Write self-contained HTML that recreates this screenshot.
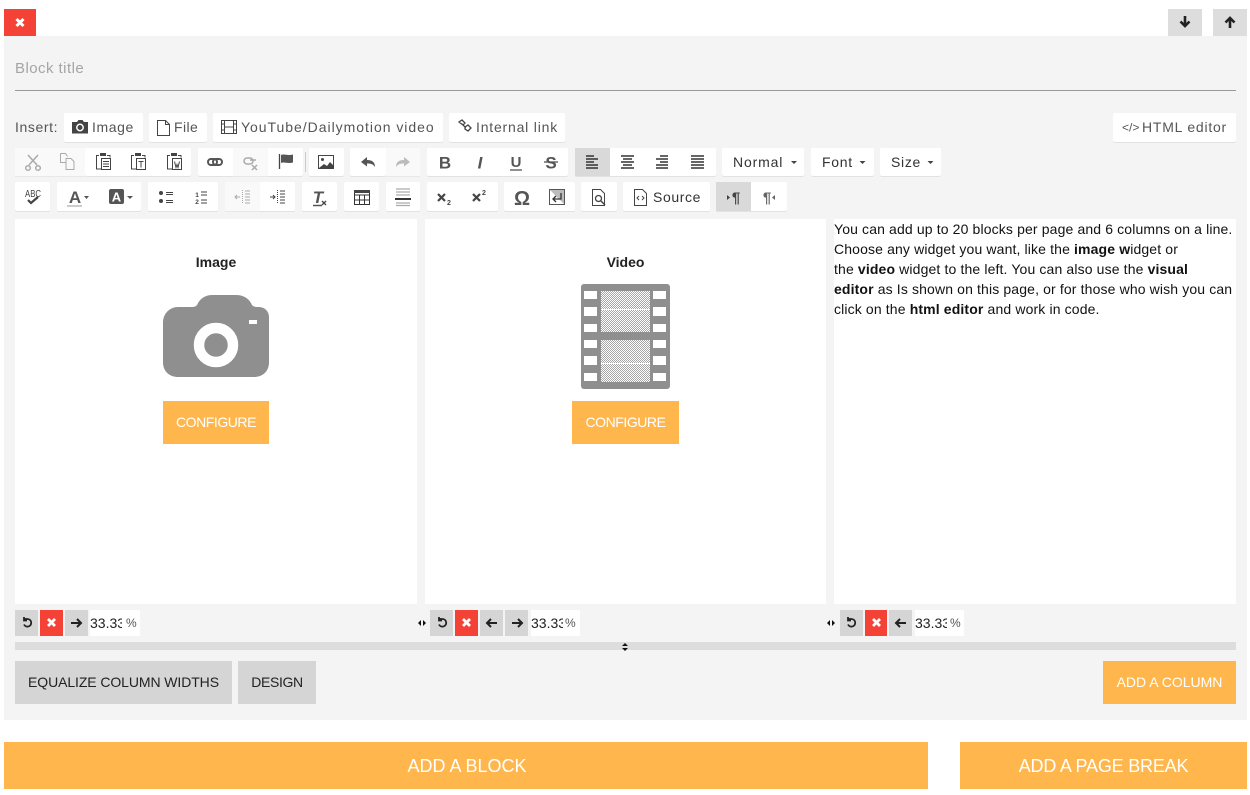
<!DOCTYPE html>
<html><head><meta charset="utf-8"><title>Block editor</title>
<style>
html,body{margin:0;padding:0;background:#fff;width:1250px;height:795px;overflow:hidden;font-family:"Liberation Sans",sans-serif}
.r{position:absolute}
.b{position:absolute;background:#fff;box-shadow:0 1px 0 #e2e2e2;border-radius:2px}
.d{position:absolute;background:#f9f9f9;box-shadow:0 1px 0 #e8e8e8}
.a{position:absolute;background:#d9d9d9}
.g{position:absolute;background:#d5d5d5}
.red{position:absolute;background:#f44336}
.o{position:absolute;background:#ffb74d}
.t{position:absolute;white-space:nowrap;line-height:20px;height:20px}
svg{position:absolute;left:0;top:0}
</style></head><body>
<div class="red" style="left:4px;top:9px;width:32px;height:27px"></div>
<div class="a" style="left:1168px;top:9px;width:34px;height:27px;background:#ddd"></div>
<div class="a" style="left:1213px;top:9px;width:34px;height:27px;background:#ddd"></div>
<div class="r" style="left:4px;top:36px;width:1243px;height:684px;background:#f4f4f4"></div>
<div class="t" style="left:15px;top:59px;font-size:15px;color:#a5a5a5;letter-spacing:.45px">Block title</div>
<div class="r" style="left:15px;top:90px;width:1221px;height:1px;background:#999"></div>

<div class="t" style="left:15px;top:117px;font-size:14px;color:#555;letter-spacing:.6px">Insert:</div>
<div class="b" style="left:64px;top:113px;width:79px;height:29px"></div>
<div class="b" style="left:149px;top:113px;width:58px;height:29px"></div>
<div class="b" style="left:213px;top:113px;width:230px;height:29px"></div>
<div class="b" style="left:449px;top:113px;width:116px;height:29px"></div>
<div class="b" style="left:1113px;top:113px;width:123px;height:29px"></div>
<div class="t" style="left:92px;top:117px;font-size:14px;color:#555;letter-spacing:.6px">Image</div>
<div class="t" style="left:174px;top:117px;font-size:14px;color:#555;letter-spacing:.4px">File</div>
<div class="t" style="left:241px;top:117px;font-size:14px;color:#555;letter-spacing:.97px">YouTube/Dailymotion video</div>
<div class="t" style="left:476px;top:117px;font-size:14px;color:#555;letter-spacing:.8px">Internal link</div>
<div class="t" style="left:1142px;top:117px;font-size:14px;color:#555;letter-spacing:.77px">HTML editor</div>

<!-- toolbar row 1 -->
<div class="d" style="left:15px;top:148px;width:70px;height:28px"></div>
<div class="b" style="left:85px;top:148px;width:106px;height:28px"></div>
<div class="b" style="left:198px;top:148px;width:105px;height:28px"></div>
<div class="d" style="left:233px;top:148px;width:35px;height:28px"></div>
<div class="r" style="left:305px;top:152px;width:1px;height:20px;background:#ccc"></div>
<div class="b" style="left:309px;top:148px;width:35px;height:28px"></div>
<div class="b" style="left:350px;top:148px;width:36px;height:28px"></div>
<div class="d" style="left:386px;top:148px;width:34px;height:28px"></div>
<div class="b" style="left:427px;top:148px;width:141px;height:28px"></div>
<div class="b" style="left:575px;top:148px;width:141px;height:28px"></div>
<div class="a" style="left:575px;top:148px;width:35px;height:28px"></div>
<div class="b" style="left:722px;top:148px;width:82px;height:28px"></div>
<div class="b" style="left:811px;top:148px;width:63px;height:28px"></div>
<div class="b" style="left:880px;top:148px;width:61px;height:28px"></div>
<div class="t" style="left:733px;top:152px;font-size:14px;color:#333;letter-spacing:.85px">Normal</div>
<div class="t" style="left:822px;top:152px;font-size:14px;color:#333;letter-spacing:.7px">Font</div>
<div class="t" style="left:891px;top:152px;font-size:14px;color:#333;letter-spacing:.7px">Size</div>

<!-- toolbar row 2 -->
<div class="b" style="left:15px;top:182px;width:35px;height:29px"></div>
<div class="b" style="left:57px;top:182px;width:84px;height:29px"></div>
<div class="b" style="left:148px;top:182px;width:70px;height:29px"></div>
<div class="b" style="left:225px;top:182px;width:70px;height:29px"></div>
<div class="d" style="left:225px;top:182px;width:35px;height:29px"></div>
<div class="b" style="left:302px;top:182px;width:35px;height:29px"></div>
<div class="b" style="left:344px;top:182px;width:35px;height:29px"></div>
<div class="b" style="left:386px;top:182px;width:34px;height:29px"></div>
<div class="b" style="left:427px;top:182px;width:71px;height:29px"></div>
<div class="b" style="left:504px;top:182px;width:71px;height:29px"></div>
<div class="b" style="left:581px;top:182px;width:36px;height:29px"></div>
<div class="b" style="left:623px;top:182px;width:87px;height:29px"></div>
<div class="b" style="left:716px;top:182px;width:71px;height:29px"></div>
<div class="a" style="left:716px;top:182px;width:35px;height:29px"></div>
<div class="t" style="left:653px;top:187px;font-size:14px;color:#333;letter-spacing:.6px">Source</div>

<!-- columns -->
<div class="r" style="left:15px;top:219px;width:402px;height:385px;background:#fff"></div>
<div class="r" style="left:425px;top:219px;width:401px;height:385px;background:#fff"></div>
<div class="r" style="left:834px;top:219px;width:402px;height:385px;background:#fff"></div>
<div class="t" style="left:15px;width:402px;text-align:center;top:252px;font-size:14px;font-weight:bold;color:#222">Image</div>
<div class="t" style="left:425px;width:401px;text-align:center;top:252px;font-size:14px;font-weight:bold;color:#222">Video</div>
<div class="o" style="left:163px;top:401px;width:106px;height:43px"></div>
<div class="o" style="left:572px;top:401px;width:107px;height:43px"></div>
<div class="t" style="left:163px;width:106px;text-align:center;top:412px;font-size:14px;color:#fff;letter-spacing:-.45px">CONFIGURE</div>
<div class="t" style="left:572px;width:107px;text-align:center;top:412px;font-size:14px;color:#fff;letter-spacing:-.45px">CONFIGURE</div>
<div class="r" style="left:834px;top:219px;width:404px;font-size:14px;line-height:20px;color:#111;white-space:nowrap;letter-spacing:.135px">You can add up to 20 blocks per page and 6 columns on a line.<br>Choose any widget you want, like the <b>image w</b>idget or<br>the <b>video</b> widget to the left. You can also use the <b>visual</b><br><b>editor</b> as Is shown on this page, or for those who wish you can<br>click on the <b>html editor</b> and work in code.</div>

<!-- film frames -->
<div class="r" style="left:581px;top:284px;width:89px;height:105px;background:#8f8f8f;border-radius:3px"></div>
<div class="r" style="left:601px;top:291px;width:49px;height:41px;background:repeating-conic-gradient(#a6a6a6 0 25%,#fff 0 50%) 0 0/2px 2px"></div>
<div class="r" style="left:601px;top:340px;width:49px;height:42px;background:repeating-conic-gradient(#a6a6a6 0 25%,#fff 0 50%) 0 0/2px 2px"></div>
<div class="r" style="left:601px;top:309px;width:49px;height:1px;background:#fff"></div>
<div class="r" style="left:601px;top:363px;width:49px;height:1px;background:#fff"></div>

<!-- column controls -->
<div class="g" style="left:15px;top:610px;width:23px;height:26px"></div>
<div class="red" style="left:40px;top:610px;width:23px;height:26px"></div>
<div class="g" style="left:65px;top:610px;width:23px;height:26px"></div>
<div class="r" style="left:90px;top:610px;width:50px;height:26px;background:#fff"></div>
<div class="r" style="left:90px;top:613px;width:32px;height:20px;overflow:hidden;font-size:14px;line-height:20px;color:#222;white-space:nowrap">33.33</div>
<div class="t" style="left:126px;top:613px;font-size:12px;color:#555">%</div>

<div class="g" style="left:430px;top:610px;width:23px;height:26px"></div>
<div class="red" style="left:455px;top:610px;width:23px;height:26px"></div>
<div class="g" style="left:480px;top:610px;width:23px;height:26px"></div>
<div class="g" style="left:505px;top:610px;width:23px;height:26px"></div>
<div class="r" style="left:531px;top:610px;width:49px;height:26px;background:#fff"></div>
<div class="r" style="left:531px;top:613px;width:32px;height:20px;overflow:hidden;font-size:14px;line-height:20px;color:#222;white-space:nowrap">33.33</div>
<div class="t" style="left:565px;top:613px;font-size:12px;color:#555">%</div>

<div class="g" style="left:840px;top:610px;width:23px;height:26px"></div>
<div class="red" style="left:865px;top:610px;width:22px;height:26px"></div>
<div class="g" style="left:889px;top:610px;width:23px;height:26px"></div>
<div class="r" style="left:915px;top:610px;width:49px;height:26px;background:#fff"></div>
<div class="r" style="left:915px;top:613px;width:32px;height:20px;overflow:hidden;font-size:14px;line-height:20px;color:#222;white-space:nowrap">33.33</div>
<div class="t" style="left:950px;top:613px;font-size:12px;color:#555">%</div>

<div class="r" style="left:15px;top:642px;width:1221px;height:8px;background:#ddd"></div>

<!-- bottom buttons -->
<div class="g" style="left:15px;top:661px;width:217px;height:43px"></div>
<div class="g" style="left:238px;top:661px;width:78px;height:43px"></div>
<div class="o" style="left:1103px;top:661px;width:133px;height:43px"></div>
<div class="t" style="left:15px;width:217px;text-align:center;top:672px;font-size:14px;color:#222;letter-spacing:-.09px">EQUALIZE COLUMN WIDTHS</div>
<div class="t" style="left:238px;width:78px;text-align:center;top:672px;font-size:14px;color:#222;letter-spacing:-.35px">DESIGN</div>
<div class="t" style="left:1103px;width:133px;text-align:center;top:672px;font-size:14px;color:#fff">ADD A COLUMN</div>
<div class="o" style="left:4px;top:742px;width:924px;height:47px"></div>
<div class="o" style="left:960px;top:742px;width:287px;height:47px"></div>
<div class="t" style="left:5px;width:924px;text-align:center;top:756px;font-size:18px;color:#fff">ADD A BLOCK</div>
<div class="t" style="left:960px;width:287px;text-align:center;top:756px;font-size:18px;color:#fff;letter-spacing:-.2px">ADD A PAGE BREAK</div>

<svg width="1250" height="795" viewBox="0 0 1250 795" font-family="Liberation Sans, sans-serif">
<!-- top icons -->
<path d="M16.500 19l7 7M23.500 19l-7 7" stroke="#fff" stroke-width="3" fill="none"/>
<path d="M1185 16v10M1180.500 21.500l4.500 4.500 4.500-4.500" stroke="#222" stroke-width="2.600" fill="none"/>
<path d="M1230 28v-10M1225.500 22.500l4.500-4.500 4.500 4.500" stroke="#222" stroke-width="2.600" fill="none"/>

<!-- insert row icons -->
<path d="M72 122h5l1.500-2h4l1.500 2h4v11.500h-16z" fill="#444"/><circle cx="80" cy="127.500" r="3.200" fill="none" stroke="#fff" stroke-width="1.500"/>
<path d="M157.500 120.500h8l4 4v11h-12zM165.500 120.500v4h4" fill="none" stroke="#444"/>
<path d="M221.500 120.500h15v13h-15zM224.500 120.500v13M233.500 120.500v13M224.500 127h9M221.500 124h3M221.500 130h3M233.500 124h3M233.500 130h3" fill="none" stroke="#444"/>
<path d="M459 122l3-2 3 3-2 2zM465 127l3-2 3 3-3 3-3-2zM462 124l4 4" fill="none" stroke="#444" stroke-width="1.300"/>
<text x="1122" y="131.500" font-size="12" fill="#555">&lt;/&gt;</text>

<!-- row 1 -->
<g fill="none" stroke="#aaa" stroke-width="1.500"><path d="M28 155l9 10M38 155l-9 10"/><circle cx="28" cy="168" r="2.300"/><circle cx="38" cy="168" r="2.300"/></g>
<path d="M60.500 153.500h5l2 3M66 158.500h5l3 3v8h-8zM60.500 153.500v9h5" fill="none" stroke="#aaa"/>
<g fill="none" stroke="#444"><path d="M99 155.500h-2.500v13.500h4.500"/><rect x="100" y="153" width="6" height="3" fill="#444" stroke="none"/><path d="M107 155.500h3v2"/><rect x="101.500" y="158.500" width="9" height="11"/><path d="M103 161.500h6M103 164h6M103 166.500h6"/></g>
<g fill="none" stroke="#444"><path d="M134 155.500h-2.500v13.500h4.500"/><rect x="135" y="153" width="6" height="3" fill="#444" stroke="none"/><path d="M142 155.500h3v2"/><rect x="136.500" y="158.500" width="9" height="11"/><path d="M138.500 161.500h5M141 161.500v6"/></g>
<g fill="none" stroke="#444"><path d="M170 155.500h-2.500v13.500h4.500"/><rect x="171" y="153" width="6" height="3" fill="#444" stroke="none"/><path d="M178 155.500h3v2"/><rect x="172.500" y="158.500" width="9" height="11"/><path d="M174.500 161.500l1.500 6 1-3 1 3 1.500-6"/></g>
<g fill="none" stroke="#555" stroke-width="2"><rect x="208" y="159" width="9" height="6" rx="3"/><rect x="213" y="159" width="9" height="6" rx="3"/></g>
<g fill="none" stroke="#aaa" stroke-width="1.500"><rect x="244" y="158" width="9" height="6" rx="3"/><path d="M250 160h6M252 165l5 5M257 165l-5 5"/></g>
<path d="M279.500 154v15" stroke="#444" stroke-width="1.300"/><path d="M281 155c4-1.500 6 1 12-.5v8c-6 1.500-8-1-12 .5z" fill="#555"/>
<rect x="318.500" y="155.500" width="15" height="13" fill="none" stroke="#444"/><circle cx="322.500" cy="159.500" r="1.500" fill="#444"/><path d="M319 168l5-4 3 2 3-4 3 3v3z" fill="#444"/>
<path d="M361 162l6-5v3c5 0 8 2 8 7-2-3-4-3.500-8-3.500v3z" fill="#555"/>
<path d="M410 162l-6-5v3c-5 0-8 2-8 7 2-3 4-3.500 8-3.500v3z" fill="#bbb"/>
<g font-size="17" fill="#555" text-anchor="middle">
<text x="445" y="168.500" font-weight="bold">B</text>
<text x="480" y="168.500" font-weight="bold" font-style="italic">I</text>
<text x="516" y="167" font-weight="bold" font-size="15">U</text>
<text x="551" y="168.500" font-weight="bold">S</text>
</g>
<path d="M510 170h12" stroke="#555" stroke-width="1.300"/><path d="M544 162h14" stroke="#555" stroke-width="1.300"/>
<g stroke="#333" stroke-width="1.500" fill="none">
<path d="M586 157h8M586 160h12M586 163h8M586 166h12M586 169h12" transform="translate(0 -1)"/>
<path d="M621 156h13M623 159h9M621 162h13M623 165h9M621 168h13"/>
<path d="M660 156h8M656 159h12M660 162h8M656 165h12M656 168h12"/>
<path d="M691 156h13M691 159h13M691 162h13M691 165h13M691 168h13"/>
</g>
<path d="M791 161h6l-3 3zM859.500 161h6l-3 3zM927.500 161h6l-3 3z" fill="#444"/>

<!-- row 2 -->
<text x="25" y="197" font-size="10" fill="#444" textLength="16" lengthAdjust="spacingAndGlyphs">ABC</text>
<path d="M28 200l3 3 7-6" fill="none" stroke="#444" stroke-width="2.200"/>
<text x="75" y="203" font-size="17" font-weight="bold" fill="#555" text-anchor="middle">A</text><path d="M67 206h15" stroke="#999"/>
<path d="M84 196h5l-2.500 3z" fill="#555"/>
<rect x="109" y="189" width="15" height="15" rx="2" fill="#555"/><text x="116.500" y="201.500" font-size="13" font-weight="bold" fill="#fff" text-anchor="middle">A</text>
<path d="M127 196h6l-3 3z" fill="#555"/>
<circle cx="161" cy="193" r="2" fill="#444"/><circle cx="161" cy="201" r="2" fill="#444"/><path d="M166 192.500h7M166 194.500h7M166 200.500h7M166 202.500h7" stroke="#444" stroke-width="1"/>
<text x="197" y="197" font-size="6.500" font-weight="bold" fill="#444" text-anchor="middle">1</text><text x="197" y="204" font-size="6.500" font-weight="bold" fill="#444" text-anchor="middle">2</text><path d="M201 192h6M201 195h6M201 200h6M201 203h6" stroke="#444" stroke-width="1"/>
<g stroke="#aaa" fill="none"><path d="M242.500 190v14" stroke-dasharray="1 1"/><path d="M245 191h5M245 194h5M245 197h5M245 200h5M245 203h5M240 197h-5M237 195l-2 2 2 2"/></g>
<g stroke="#444" fill="none"><path d="M277.500 190v14" stroke-dasharray="1 1"/><path d="M280 191h5M280 194h5M280 197h5M280 200h5M280 203h5M270 197h5M273 195l2 2-2 2"/></g>
<text x="318" y="203" font-size="17" font-weight="bold" font-style="italic" fill="#555" text-anchor="middle">T</text><path d="M313 205.500h9" stroke="#555" stroke-width="1.500"/><path d="M322 201l4 4M326 201l-4 4" stroke="#444" stroke-width="1.300"/>
<path d="M354.500 190.500h15v14h-15zM354.500 195h15M354.500 200h15M359.500 195v10M364.500 195v10" fill="none" stroke="#333"/><rect x="354" y="190" width="16" height="3" fill="#444"/>
<path d="M396 189h14M396 192h14M396 195h14M396 203h14M396 205.500h14" stroke="#aaa" stroke-width="1.300"/><path d="M395 199h16" stroke="#333" stroke-width="2"/>
<path d="M438 194l7 7M445 194l-7 7M473 194l7 7M480 194l-7 7" stroke="#444" stroke-width="2.200"/>
<text x="449" y="205" font-size="7" font-weight="bold" fill="#444" text-anchor="middle">2</text><text x="484" y="195" font-size="7" font-weight="bold" fill="#444" text-anchor="middle">2</text>
<text x="522" y="205" font-size="20" font-weight="bold" fill="#555" text-anchor="middle">Ω</text>
<rect x="549.500" y="189.500" width="15" height="15" fill="none" stroke="#555"/><path d="M550 190l14 14v-14z" fill="#bbb"/><path d="M561 193v6h-8M556 196l-3 3 3 3" fill="none" stroke="#333" stroke-width="1.300"/>
<path d="M592.500 189.500h8l4 4v12h-12z" fill="none" stroke="#444"/><circle cx="598.500" cy="198.500" r="3" fill="none" stroke="#444" stroke-width="1.300"/><path d="M601 201l4 4" stroke="#444" stroke-width="1.500"/>
<path d="M634.500 189.500h8l4 4v12h-12z" fill="none" stroke="#444"/><path d="M639 196l-2 2 2 2M642 196l2 2-2 2" fill="none" stroke="#444"/>
<path d="M727 195l3 2.500-3 2.500z" fill="#444"/><text x="736" y="202.500" font-size="15" font-weight="bold" fill="#444" text-anchor="middle">¶</text>
<text x="767" y="202.500" font-size="15" font-weight="bold" fill="#666" text-anchor="middle">¶</text><path d="M775 195l-3 2.500 3 2.500z" fill="#666"/>

<!-- camera -->
<path d="M163 322a15 15 0 0 1 15-15h14c3 0 5-1 6-4 3-5 8-8 14-8h24c7 0 12 3 15 8 1 3 3 4 6 4h2a10 10 0 0 1 10 10v46a14 14 0 0 1-14 14h-78a14 14 0 0 1-14-14z" fill="#8f8f8f"/>
<circle cx="216" cy="345" r="17" fill="#8f8f8f" stroke="#fff" stroke-width="10.500"/>
<rect x="249" y="320" width="8" height="4" fill="#fff"/>

<!-- film holes -->
<g fill="#fff">
<rect x="584" y="291" width="13" height="8"/><rect x="584" y="307" width="13" height="9"/><rect x="584" y="324" width="13" height="8"/>
<rect x="584" y="340" width="13" height="8"/><rect x="584" y="356" width="13" height="9"/><rect x="584" y="373" width="13" height="8"/>
<rect x="653" y="291" width="13" height="8"/><rect x="653" y="307" width="13" height="9"/><rect x="653" y="324" width="13" height="8"/>
<rect x="653" y="340" width="13" height="8"/><rect x="653" y="356" width="13" height="9"/><rect x="653" y="373" width="13" height="8"/>
</g>

<!-- controls icons -->
<g fill="none" stroke="#222" stroke-width="1.800">
<path d="M24 619h3.500a3.800 3.800 0 1 1-3.500 5.500M24 617v3.500h3"/>
<path d="M439 619h3.500a3.800 3.800 0 1 1-3.500 5.500M439 617v3.500h3"/>
<path d="M848 619h3.500a3.800 3.800 0 1 1-3.500 5.500M848 617v3.500h3"/>
</g>
<g stroke="#fff" stroke-width="2.800" fill="none">
<path d="M48 619l7 7M55 619l-7 7"/><path d="M463 619l7 7M470 619l-7 7"/><path d="M873 619l7 7M880 619l-7 7"/>
</g>
<g stroke="#222" stroke-width="2" fill="none">
<path d="M71 623h10M77 619l4 4-4 4"/>
<path d="M487 623h10M491 619l-4 4 4 4"/>
<path d="M512 623h10M518 619l4 4-4 4"/>
<path d="M896 623h10M900 619l-4 4 4 4"/>
</g>
<!-- resize handles -->
<path d="M418 623l3-3v6zM426 623l-3-3v6zM827 623l3-3v6zM835 623l-3-3v6z" fill="#111"/>
<path d="M625 643l3 3h-6zM625 651l3-3h-6z" fill="#111"/>
</svg>
</body></html>
